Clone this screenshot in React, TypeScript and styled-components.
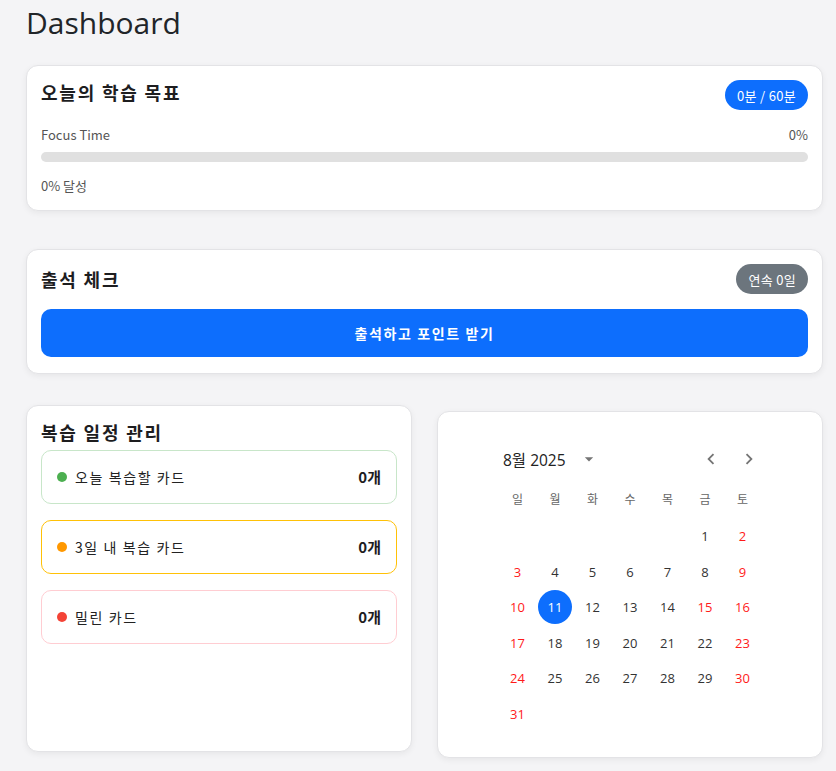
import React from "react";
import styled, { createGlobalStyle } from "styled-components";

const GlobalStyle = createGlobalStyle`
  html, body {
    margin: 0;
    padding: 0;
    background: #f4f4f6;
  }
  body {
    font-family: "Open Sans", "Noto Sans CJK KR", "Noto Sans", sans-serif;
    color: #212529;
  }
  * { box-sizing: border-box; }
`;

const Page = styled.div`
  padding: 0 13px 13px 26px;
`;

const Title = styled.h1`
  margin: 0 0 20px;
  font-size: 30px;
  line-height: 45px;
  font-weight: 500;
  color: #212529;
  font-family: "Open Sans", "Noto Sans", sans-serif;
`;

const Card = styled.section<{ $mb?: number; $mt?: number }>`
  background: #fff;
  border: 1px solid #e3e3e6;
  border-radius: 12px;
  box-shadow: 0 2px 6px rgba(0, 0, 0, 0.06);
  padding: 14px 14px 14px;
  margin-bottom: ${(p) => p.$mb ?? 0}px;
  margin-top: ${(p) => p.$mt ?? 0}px;
`;

const AttendCard = styled(Card)`
  padding: 14px 14px 16px;
`;

const CardHeader = styled.div<{ $align?: string }>`
  display: flex;
  justify-content: space-between;
  align-items: ${(p) => p.$align ?? "center"};
`;

const CardTitle = styled.h2`
  margin: 0;
  font-family: "Noto Sans CJK KR", sans-serif;
  font-size: 18px;
  line-height: 24px;
  font-weight: 700;
  letter-spacing: 1.8px;
  color: #1d1d1f;
`;

const Badge = styled.span<{ $bg: string }>`
  display: inline-flex;
  align-items: center;
  height: 30px;
  padding: 0 12px;
  border-radius: 15px;
  background: ${(p) => p.$bg};
  color: #fff;
  font-family: "Noto Sans CJK KR", sans-serif;
  font-size: 13px;
  font-weight: 400;
  letter-spacing: 0.3px;
`;

const MetaRow = styled.div<{ $mt: number }>`
  display: flex;
  justify-content: space-between;
  margin-top: ${(p) => p.$mt}px;
  font-family: "Noto Sans CJK KR", sans-serif;
  font-size: 13px;
  line-height: 20px;
  color: #555;
`;

const Track = styled.div`
  margin-top: 7px;
  height: 10px;
  border-radius: 5px;
  background: #e0e0e0;
  overflow: hidden;
`;

const Fill = styled.div`
  height: 100%;
  background: #0d6efd;
`;

const PrimaryButton = styled.button`
  display: block;
  width: 100%;
  margin-top: 15px;
  height: 48px;
  border: none;
  border-radius: 10px;
  background: #0d6efd;
  color: #fff;
  font-family: "Noto Sans CJK KR", sans-serif;
  font-size: 14px;
  font-weight: 700;
  letter-spacing: 1.6px;
  cursor: pointer;
`;

const Columns = styled.div`
  display: grid;
  grid-template-columns: 1fr 1fr;
  column-gap: 25px;
  align-items: start;
`;

const ReviewCard = styled(Card)`
  min-height: 347px;
`;

const ReviewList = styled.div`
  display: flex;
  flex-direction: column;
  gap: 16px;
  margin-top: 6px;
`;

const ReviewItem = styled.div<{ $border: string }>`
  display: flex;
  align-items: center;
  justify-content: space-between;
  padding: 15px 15px;
  border: 1px solid ${(p) => p.$border};
  border-radius: 10px;
  font-family: "Noto Sans CJK KR", sans-serif;
  font-size: 14px;
  line-height: 22px;
`;

const ItemLabel = styled.span`
  display: flex;
  align-items: center;
  gap: 8px;
  color: #222;
  letter-spacing: 1.6px;
`;

const Dot = styled.span<{ $color: string }>`
  width: 10px;
  height: 10px;
  border-radius: 50%;
  background: ${(p) => p.$color};
`;

const Count = styled.span`
  font-weight: 700;
  font-size: 15px;
  color: #1d1d1f;
`;

const CalendarCard = styled(Card)`
  padding: 32px 14px 26px;
  display: flex;
  justify-content: center;
`;

const Calendar = styled.div`
  width: 300px;
  font-family: "Noto Sans CJK KR", sans-serif;
`;

const CalHeader = styled.div`
  display: flex;
  align-items: center;
  height: 30px;
  padding: 0 17px 0 23px;
`;

const MonthLabel = styled.div`
  font-size: 15.5px;
  color: #222;
  font-family: "Open Sans", "Noto Sans CJK KR", sans-serif;
`;

const IconButton = styled.button`
  display: inline-flex;
  align-items: center;
  justify-content: center;
  width: 28px;
  height: 28px;
  padding: 0;
  border: none;
  background: transparent;
  color: #757575;
  cursor: pointer;
`;

const DropButton = styled(IconButton)`
  margin-left: 9px;
`;

const Spacer = styled.div`
  flex: 1;
`;

const NavGroup = styled.div`
  display: flex;
  gap: 10px;
`;

const Grid = styled.div<{ $mt: number }>`
  display: grid;
  grid-template-columns: repeat(7, 37.5px);
  justify-content: center;
  row-gap: 1.6px;
  margin-top: ${(p) => p.$mt}px;
`;

const WeekLabel = styled.div`
  height: 36px;
  display: flex;
  align-items: center;
  justify-content: center;
  font-size: 12px;
  color: #666;
`;

const Day = styled.div<{ $red?: boolean; $selected?: boolean }>`
  justify-self: center;
  width: 34px;
  height: 34px;
  border-radius: 50%;
  display: flex;
  align-items: center;
  justify-content: center;
  font-size: 13px;
  font-family: "Open Sans", "Noto Sans CJK KR", sans-serif;
  color: ${(p) => (p.$selected ? "#fff" : p.$red ? "#ff1a1a" : "#333")};
  background: ${(p) => (p.$selected ? "#0d6efd" : "transparent")};
`;

const Empty = styled.div`
  height: 34px;
`;

const weekdays = ["일", "월", "화", "수", "목", "금", "토"];
const holidays = [15];

export default function App() {
  const firstDow = 5; // Aug 1 2025 is Friday
  const cells: React.ReactNode[] = [];
  for (let i = 0; i < firstDow; i++) cells.push(<Empty key={`e${i}`} />);
  for (let d = 1; d <= 31; d++) {
    const dow = (firstDow + d - 1) % 7;
    const red = dow === 0 || dow === 6 || holidays.includes(d);
    cells.push(
      <Day key={d} $red={red} $selected={d === 11}>
        {d}
      </Day>
    );
  }

  return (
    <>
      <GlobalStyle />
      <Page>
        <Title>Dashboard</Title>

        <Card $mb={38}>
          <CardHeader $align="flex-start">
            <CardTitle>오늘의 학습 목표</CardTitle>
            <Badge $bg="#0d6efd">0분 / 60분</Badge>
          </CardHeader>
          <MetaRow $mt={15}>
            <span>Focus Time</span>
            <span>0%</span>
          </MetaRow>
          <Track>
            <Fill style={{ width: "0%" }} />
          </Track>
          <MetaRow $mt={14}>
            <span>0% 달성</span>
          </MetaRow>
        </Card>

        <AttendCard $mb={31}>
          <CardHeader>
            <CardTitle>출석 체크</CardTitle>
            <Badge $bg="#6c757d">연속 0일</Badge>
          </CardHeader>
          <PrimaryButton>출석하고 포인트 받기</PrimaryButton>
        </AttendCard>

        <Columns>
          <ReviewCard>
            <CardTitle>복습 일정 관리</CardTitle>
            <ReviewList>
              <ReviewItem $border="#c8e6c9">
                <ItemLabel>
                  <Dot $color="#4caf50" />
                  오늘 복습할 카드
                </ItemLabel>
                <Count>0개</Count>
              </ReviewItem>
              <ReviewItem $border="#ffc107">
                <ItemLabel>
                  <Dot $color="#ff9800" />
                  3일 내 복습 카드
                </ItemLabel>
                <Count>0개</Count>
              </ReviewItem>
              <ReviewItem $border="#ffcdd2">
                <ItemLabel>
                  <Dot $color="#f44336" />
                  밀린 카드
                </ItemLabel>
                <Count>0개</Count>
              </ReviewItem>
            </ReviewList>
          </ReviewCard>

          <CalendarCard $mt={6}>
            <Calendar>
              <CalHeader>
                <MonthLabel>8월 2025</MonthLabel>
                <DropButton aria-label="연도 선택">
                  <svg width="20" height="20" viewBox="0 0 24 24" fill="currentColor">
                    <path d="M7 10l5 5 5-5z" />
                  </svg>
                </DropButton>
                <Spacer />
                <NavGroup>
                  <IconButton aria-label="이전 달">
                    <svg width="22" height="22" viewBox="0 0 24 24" fill="currentColor">
                      <path d="M15.41 7.41 14 6l-6 6 6 6 1.41-1.41L10.83 12z" />
                    </svg>
                  </IconButton>
                  <IconButton aria-label="다음 달">
                    <svg width="22" height="22" viewBox="0 0 24 24" fill="currentColor">
                      <path d="M10 6 8.59 7.41 13.17 12l-4.58 4.59L10 18l6-6z" />
                    </svg>
                  </IconButton>
                </NavGroup>
              </CalHeader>
              <Grid $mt={6}>
                {weekdays.map((w) => (
                  <WeekLabel key={w}>{w}</WeekLabel>
                ))}
              </Grid>
              <Grid $mt={3}>{cells}</Grid>
            </Calendar>
          </CalendarCard>
        </Columns>
      </Page>
    </>
  );
}
